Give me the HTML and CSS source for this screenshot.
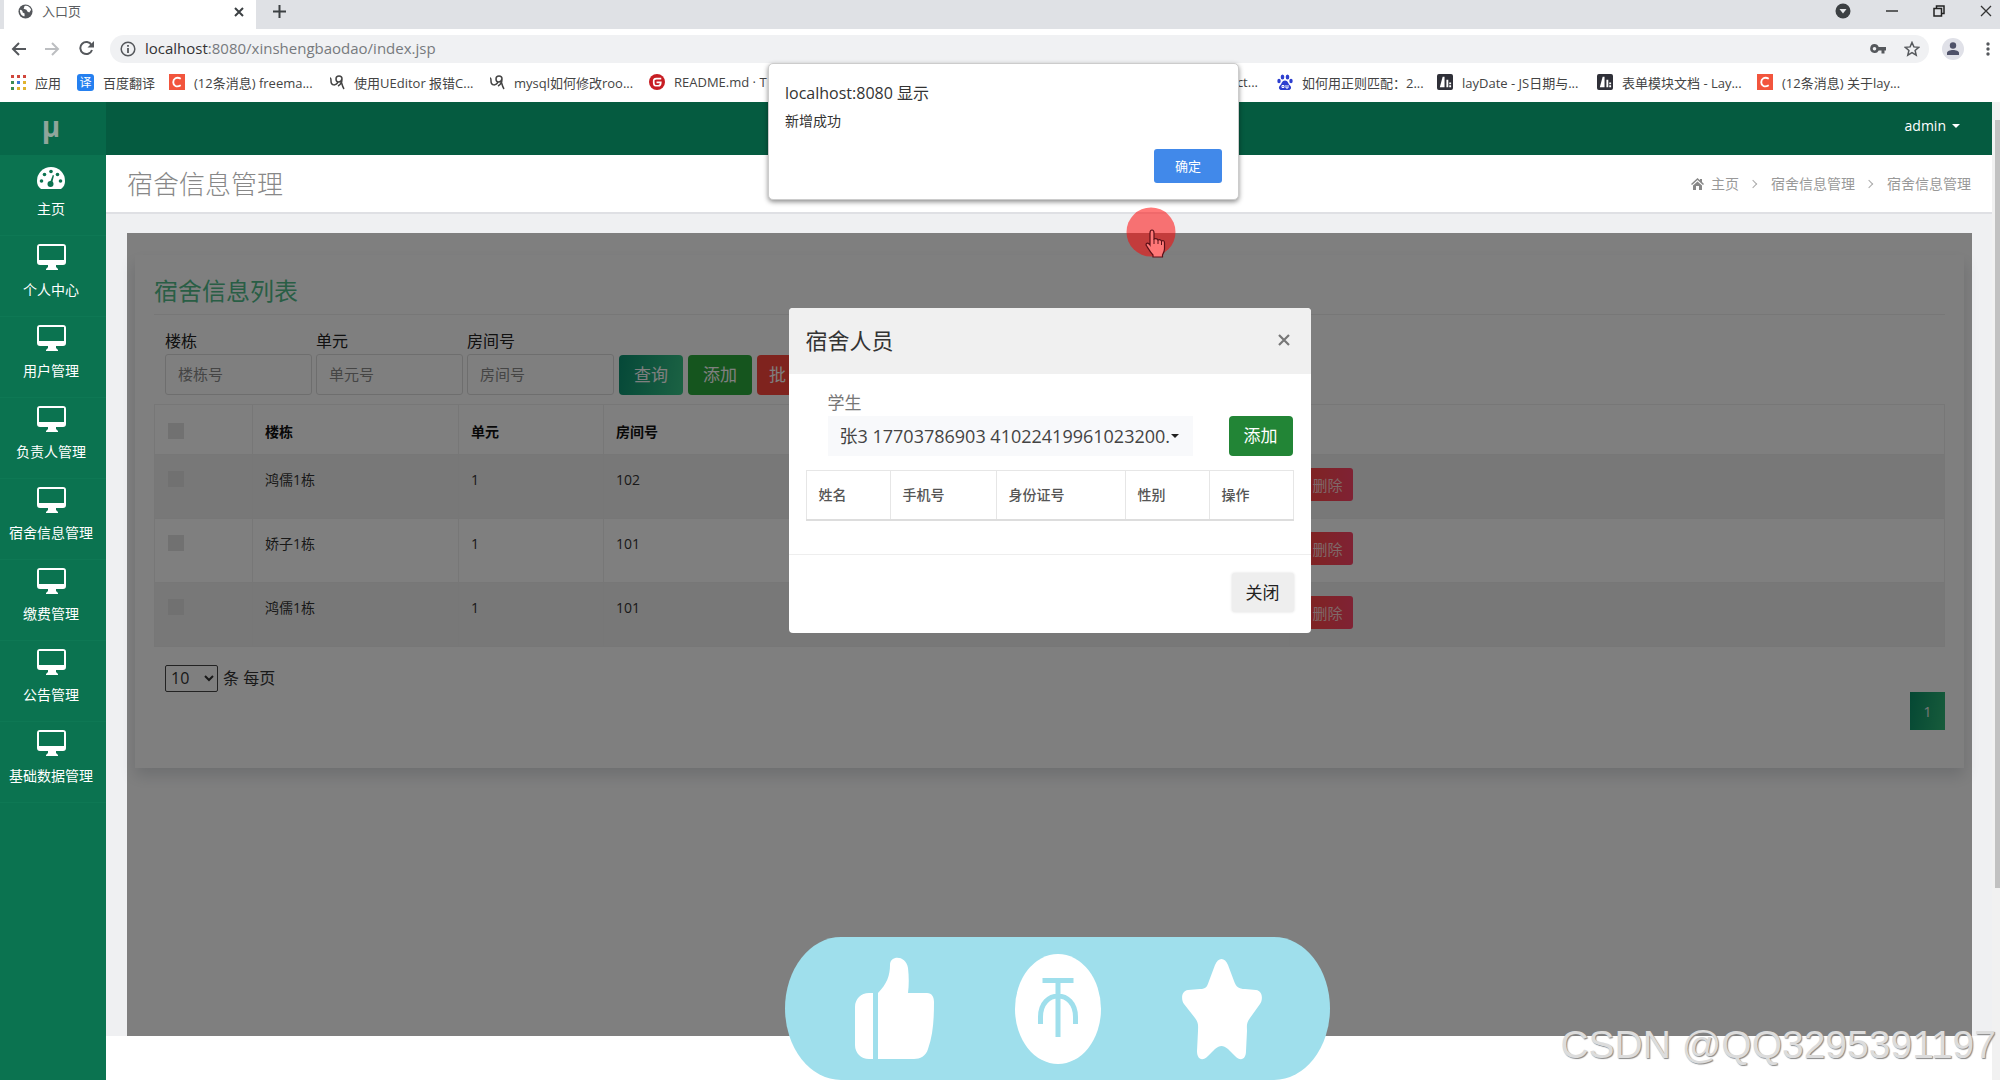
FILE: index.html
```html
<!DOCTYPE html>
<html lang="zh-CN">
<head>
<meta charset="utf-8">
<title>入口页</title>
<link rel="stylesheet" href="styles.css">
</head>
<body>
<svg class="defs" aria-hidden="true">
  <symbol id="i-monitor" viewBox="0 0 29 26"><path fill="currentColor" fill-rule="evenodd" d="M3 0h23a3 3 0 0 1 3 3v15a3 3 0 0 1-3 3h-7v2l2 2v1H9v-1l2-2v-2H3a3 3 0 0 1-3-3V3a3 3 0 0 1 3-3zM2 2v14h25V2z"/></symbol>
  <symbol id="i-dash" viewBox="0 0 28 22"><path fill="currentColor" d="M4 22C1 20 0 17 0 14a14 14 0 0 1 28 0c0 3-1 6-4 8z"/><g fill="#0b7350"><circle cx="4.500" cy="14" r="1.800"/><circle cx="7.500" cy="7.500" r="1.800"/><circle cx="14" cy="4.500" r="1.800"/><circle cx="20.500" cy="7.500" r="1.800"/><circle cx="23.500" cy="14" r="1.800"/><circle cx="13.500" cy="17" r="3"/><path d="M12.800 16l3-8 1.200.5-2 8z"/></g></symbol>
  <symbol id="i-c" viewBox="0 0 17 17"><path fill="#f2553d" d="M0 0h17v17H0z"/><path fill="none" stroke="#fff" stroke-width="2" d="M12.500 5C8 2.500 4.500 5 4.500 8.700s3.500 6 8 3.300"/></symbol>
  <symbol id="i-ua" viewBox="0 0 16 16"><path fill="none" stroke="#444" stroke-width="1.500" d="M1 4c1 0 1 1 1 3 0 5 5 5 7 1M13 5c0-4-6-4-6 0s5 4 6 0c0 4-2 6-4 7M12 7c1 2 1 5 3 8"/></symbol>
  <symbol id="i-lay" viewBox="0 0 17 17"><rect width="17" height="17" rx="2" fill="#2f3038"/><path fill="#fff" d="M3 14L6 3h2v11zM10 6h2v8h-2zm3 3h2v2h-2zm0 3h2v2h-2z"/></symbol>
</svg>
<div class="window">
  <header class="tabs">
    <div class="tab">
      <svg class="tab-icon" viewBox="0 0 16 16"><circle cx="8" cy="8" r="7.500" fill="#54575b"/><path fill="#fff" d="M2 6c2 0 3 1 3 3l2 1v3c-3 0-5-3-5-7zM7 2c3-1 6 1 7 4l-2 3-2-1-1-2-3-1z"/></svg>
      <span class="tab-title">入口页</span>
      <button class="bare" aria-label="关闭标签"><svg width="10" height="10" viewBox="0 0 10 10"><path d="M1 1l8 8M9 1l-8 8" stroke="#3c4043" stroke-width="2"/></svg></button>
    </div>
    <button class="bare new-tab" aria-label="新标签"><svg width="13" height="13" viewBox="0 0 13 13"><path d="M6.500 0v13M0 6.500h13" stroke="#3c4043" stroke-width="2"/></svg></button>
    <div class="win-buttons">
      <button class="bare" aria-label="标签搜索"><svg width="16" height="16" viewBox="0 0 16 16"><circle cx="8" cy="8" r="7.500" fill="#3c4043"/><path d="M4.500 6h7L8 10.500z" fill="#e6e8eb"/></svg></button>
      <button class="bare" aria-label="最小化"><svg width="12" height="12" viewBox="0 0 12 12"><path d="M0 6h12" stroke="#333" stroke-width="1.500"/></svg></button>
      <button class="bare" aria-label="还原"><svg width="12" height="12" viewBox="0 0 12 12"><path d="M1 3.500h7.500V11H1zM3.500 3V1H11v7.500H9" fill="none" stroke="#222" stroke-width="1.500"/></svg></button>
      <button class="bare" aria-label="关闭"><svg width="12" height="12" viewBox="0 0 12 12"><path d="M1 1l10 10M11 1L1 11" stroke="#333" stroke-width="1.300"/></svg></button>
    </div>
  </header>
  <div class="toolbar">
    <div class="nav-buttons">
      <button class="bare" aria-label="后退"><svg width="15" height="14" viewBox="0 0 15 14"><path d="M15 7H2M8 1L2 7l6 6" fill="none" stroke="#55585c" stroke-width="2"/></svg></button>
      <button class="bare" aria-label="前进"><svg width="15" height="14" viewBox="0 0 15 14"><path d="M0 7h13M7 1l6 6-6 6" fill="none" stroke="#bcbec1" stroke-width="2"/></svg></button>
      <button class="bare" aria-label="刷新"><svg width="15" height="15" viewBox="0 0 15 15"><path d="M12.500 4A6 6 0 1 0 13 9" fill="none" stroke="#55585c" stroke-width="2"/><path d="M15 0v6.500H8.500z" fill="#55585c"/></svg></button>
    </div>
    <div class="omnibox">
      <svg width="16" height="16" viewBox="0 0 16 16"><circle cx="8" cy="8" r="6.800" fill="none" stroke="#55585c" stroke-width="1.500"/><path d="M8 7v5M8 4v1.800" stroke="#55585c" stroke-width="1.800"/></svg>
      <span class="url"><b>localhost</b>:8080/xinshengbaodao/index.jsp</span>
      <svg width="16" height="10" viewBox="0 0 16 10"><path fill="#55585c" fill-rule="evenodd" d="M4.500 0a4.500 4.500 0 0 1 4.200 3H16v3.500h-1.500V9.500h-3V6.500H8.700A4.500 4.500 0 1 1 4.500 0zm0 3a1.800 1.800 0 1 0 0 3.600 1.800 1.800 0 0 0 0-3.600z"/></svg>
      <svg width="16" height="16" viewBox="0 0 16 16"><path d="M8 1.500l1.900 4.400 4.800.4-3.600 3.200 1.100 4.700L8 11.700l-4.200 2.500 1.100-4.700-3.600-3.200 4.800-.4z" fill="none" stroke="#55585c" stroke-width="1.500"/></svg>
    </div>
    <svg class="avatar" viewBox="0 0 22 22"><circle cx="11" cy="11" r="11" fill="#e0e1e8"/><circle cx="11" cy="7.500" r="3.200" fill="#4f5269"/><path d="M5 17v-2c0-4 12-4 12 0v2z" fill="#4f5269"/></svg>
    <button class="bare" aria-label="菜单"><svg width="4" height="14" viewBox="0 0 4 14"><g fill="#55585c"><circle cx="2" cy="2" r="1.700"/><circle cx="2" cy="7" r="1.700"/><circle cx="2" cy="12" r="1.700"/></g></svg></button>
  </div>
  <nav class="bookmarks">
    <a href="#" class="mark mark-apps"><svg viewBox="0 0 16 16"><g fill="#d0473c"><path d="M1 1h3v3H1zM7 1h3v3H7zM13 1h3v3h-3z"/></g><path fill="#3d8b53" d="M1 7h3v3H1zM1 13h3v3H1z"/><path fill="#3b78d8" d="M7 7h3v3H7z"/><path fill="#e0b32d" d="M13 7h3v3h-3zM7 13h3v3H7zM13 13h3v3h-3z"/></svg>应用</a>
    <a href="#" class="mark mark-fy"><span class="fy">译</span>百度翻译</a>
    <a href="#" class="mark"><svg><use href="#i-c"/></svg>(12条消息) freema...</a>
    <a href="#" class="mark"><svg><use href="#i-ua"/></svg>使用UEditor 报错C...</a>
    <a href="#" class="mark"><svg><use href="#i-ua"/></svg>mysql如何修改roo...</a>
    <a href="#" class="mark"><svg viewBox="0 0 17 17"><circle cx="8.500" cy="8.500" r="8.500" fill="#c71d23"/><path d="M13 5H8C5 5 5 6 5 8.500S5 12.500 7 12.500h3c2 0 2.500-1 2.500-3.500H8" fill="none" stroke="#fff" stroke-width="1.800"/></svg>README.md · T</a>
    <a href="#" class="mark mark-under">ct...</a>
    <a href="#" class="mark"><svg viewBox="0 0 16 16"><g fill="#2d3fcf"><ellipse cx="5.500" cy="3" rx="1.800" ry="2.600"/><ellipse cx="10.500" cy="3" rx="1.800" ry="2.600"/><ellipse cx="2" cy="7" rx="1.700" ry="2.200"/><ellipse cx="14" cy="7" rx="1.700" ry="2.200"/><path d="M8 6.500c3 0 3 3 5 5s1 4.500-1.500 4.500h-7C2 16 1 13.500 3 11.500s2-5 5-5z"/></g><path d="M5 11.500h2v2H5zM9 11v3h2v-3" fill="none" stroke="#fff"/></svg>如何用正则匹配：2...</a>
    <a href="#" class="mark"><svg><use href="#i-lay"/></svg>layDate - JS日期与...</a>
    <a href="#" class="mark"><svg><use href="#i-lay"/></svg>表单模块文档 - Lay...</a>
    <a href="#" class="mark"><svg><use href="#i-c"/></svg>(12条消息) 关于lay...</a>
  </nav>

  <div class="page">
    <aside class="sidebar">
      <div class="logo">μ</div>
      <a href="#" class="side-item"><svg class="dash"><use href="#i-dash"/></svg>主页</a>
      <a href="#" class="side-item"><svg><use href="#i-monitor"/></svg>个人中心</a>
      <a href="#" class="side-item"><svg><use href="#i-monitor"/></svg>用户管理</a>
      <a href="#" class="side-item"><svg><use href="#i-monitor"/></svg>负责人管理</a>
      <a href="#" class="side-item"><svg><use href="#i-monitor"/></svg>宿舍信息管理</a>
      <a href="#" class="side-item"><svg><use href="#i-monitor"/></svg>缴费管理</a>
      <a href="#" class="side-item"><svg><use href="#i-monitor"/></svg>公告管理</a>
      <a href="#" class="side-item"><svg><use href="#i-monitor"/></svg>基础数据管理</a>
    </aside>
    <main class="main">
      <div class="topbar"><button class="bare user">admin<span class="caret"></span></button></div>
      <div class="titlebar">
        <h1>宿舍信息管理</h1>
        <nav class="crumbs">
          <svg width="13" height="12" viewBox="0 0 13 12"><path fill="#888" d="M6.500 0L0 6l1 1 5.500-5L12 7l1-1-2-2V1H9v1.300zM2 7.500L6.500 3.500 11 7.500V12H8V8H5v4H2z"/></svg>
          <a href="#">主页</a><i></i><a href="#">宿舍信息管理</a><i></i><a href="#">宿舍信息管理</a>
        </nav>
      </div>
      <div class="content">
        <section class="frame">
          <div class="card">
            <h2>宿舍信息列表</h2>
            <form class="filters">
              <label>楼栋<input type="text" placeholder="楼栋号"></label>
              <label>单元<input type="text" placeholder="单元号"></label>
              <label>房间号<input type="text" placeholder="房间号"></label>
              <button type="button" class="btn btn-query">查询</button>
              <button type="button" class="btn btn-add">添加</button>
              <button type="button" class="btn btn-batch">批</button>
            </form>
            <table class="rooms">
              <colgroup><col class="c1"><col class="c2"><col class="c3"><col class="c4"><col></colgroup>
              <thead><tr><th><input type="checkbox" aria-label="全选"></th><th>楼栋</th><th>单元</th><th>房间号</th><th></th></tr></thead>
              <tbody>
                <tr><td><input type="checkbox" aria-label="选择"></td><td>鸿儒1栋</td><td>1</td><td>102</td><td class="ops"><button class="btn-del">删除</button></td></tr>
                <tr><td><input type="checkbox" aria-label="选择"></td><td>娇子1栋</td><td>1</td><td>101</td><td class="ops"><button class="btn-del">删除</button></td></tr>
                <tr><td><input type="checkbox" aria-label="选择"></td><td>鸿儒1栋</td><td>1</td><td>101</td><td class="ops"><button class="btn-del">删除</button></td></tr>
              </tbody>
            </table>
            <label class="per-page"><select><option>10</option></select>条 每页</label>
            <div class="pager"><button>1</button></div>
          </div>
          <div class="backdrop">
            <div class="modal" role="dialog">
              <div class="modal-head"><h3>宿舍人员</h3><button class="bare" aria-label="关闭"><svg width="12" height="12" viewBox="0 0 12 12"><path d="M1 1l10 10M11 1L1 11" stroke="#777" stroke-width="2.200"/></svg></button></div>
              <div class="modal-body">
                <div class="picker">
                  <div class="picker-field">
                    <label for="stu">学生</label>
                    <div class="select-wrap"><select id="stu"><option>张3 17703786903 41022419961023200.</option></select><span class="caret"></span></div>
                  </div>
                  <button class="btn btn-add-solid">添加</button>
                </div>
                <table class="people">
                  <colgroup><col class="p1"><col class="p2"><col class="p3"><col class="p4"><col></colgroup>
                  <thead><tr><th>姓名</th><th>手机号</th><th>身份证号</th><th>性别</th><th>操作</th></tr></thead>
                </table>
              </div>
              <div class="modal-foot"><button class="btn-close">关闭</button></div>
            </div>
          </div>
        </section>
      </div>
      <footer class="bottom"></footer>
    </main>
    <div class="scrollbar"><div class="thumb"></div></div>
  </div>

  <div class="alert" role="alertdialog">
    <div class="alert-title">localhost:8080 显示</div>
    <p>新增成功</p>
    <button>确定</button>
  </div>
  <svg class="pointer" viewBox="0 0 50 52"><circle cx="25" cy="25" r="24.500" fill="#f00" fill-opacity=".53"/><path d="M24 26c0-4 4-4 4 0v6c3-1 3 0 4 1 2-1 3 0 3.500 1 2-1 3 0 3 2v6c0 2-1 4-2 6v2H27v-2c-3-3-5-7-7-10 0-2 2-3 4 0z" fill="#f77" stroke="#5a1018" stroke-width="1.200"/><path d="M28 32v5M32 33v4M35.500 34v4" stroke="#5a1018"/></svg>
  <svg class="praise" viewBox="0 0 545 143"><path fill="#9fdfec" d="M56 0h433a56 71.500 0 0 1 0 143H56A56 71.500 0 0 1 56 0z"/>
    <g fill="#fff"><path d="M84 56h4v66h-4c-8 0-14-6-14-14V70c0-8 6-14 14-14zM93 56c9-9 12-18 12-28 0-10 16-10 18 3 1 9 1 17 0 25h19c5 0 7 4 7 9 0 18-1 33-6 47-2 7-8 10-14 10H93z"/><ellipse cx="273" cy="72" rx="43" ry="55"/><path d="M430 28c3-8 10-8 13 0l6 16c2 6 5 8 11 8l11 1c7 1 7 10 4 14l-10 14c-4 5-3 9-3 13l-1 20c0 8-5 11-11 5l-7-7c-5-4-8-4-13 0l-7 7c-6 6-11 3-11-5l1-20c0-4 1-8-3-13l-11-14c-3-4-3-13 4-14l12-1c6 0 7-2 9-8z"/></g>
    <path fill="none" stroke="#9fdfec" stroke-width="5" d="M257.500 43.500h31M273 44v56M255.500 87V80c0-28 35-28 35 0v7"/></svg>
  <div class="watermark">CSDN @QQ3295391197</div>
</div>
</body>
</html>
```
FILE: styles.css
```css
* { box-sizing: border-box; }
body {
  margin: 0;
  overflow: hidden;
  font-family: "Open Sans", "Noto Sans CJK SC", sans-serif;
  font-size: 14px;
  color: #333;
}
a { color: inherit; text-decoration: none; }
h1, h2, h3, p { margin: 0; font-weight: 400; }
button, input, select { font: inherit; }
svg { display: block; flex: none; }
.defs { position: absolute; width: 0; height: 0; }
.bare { display: flex; padding: 0; border: 0; background: none; color: inherit; }
.window { position: relative; display: flex; flex-direction: column; min-height: 100vh; background: #fff; }

/* browser chrome */
.tabs { display: flex; height: 29px; background: #dfe1e5; }
.tab { display: flex; align-items: center; width: 252px; margin-left: 4px; padding: 0 12px 6px 14px; background: #fff; }
.tab-icon { width: 15px; height: 15px; }
.tab-title { flex: 1; margin-left: 9px; font-size: 13px; line-height: 23px; color: #5a5d61; }
.new-tab { align-items: center; padding: 0 0 6px 17px; }
.win-buttons { display: flex; align-items: center; gap: 35px; margin-left: auto; padding: 0 8px 8px 0; }
.toolbar { display: flex; align-items: center; height: 34px; padding: 5px 10px 0 11px; }
.nav-buttons { display: flex; align-items: center; gap: 19px; width: 99px; }
.omnibox { display: flex; flex: 1; align-items: center; gap: 18px; height: 28px; padding: 0 9px 0 10px; border-radius: 14px; background: #f0f1f3; }
.url { flex: 1; margin-left: -9px; padding-bottom: 2px; font-size: 15px; line-height: 24px; color: #777a7e; }
.url b { font-weight: 400; color: #333; }
.avatar { width: 22px; height: 22px; margin: 0 22px 0 13px; }
.bookmarks { display: flex; height: 39px; padding: 0 0 1px 10px; white-space: nowrap; }
.mark { display: flex; align-items: center; gap: 9px; width: 160px; flex: none; font-size: 13px; color: #444; }
.mark svg { width: 16px; height: 16px; }
.mark-apps { width: 67px; }
.mark-fy { width: 92px; }
.mark-under { width: 468px; justify-content: flex-end; padding-right: 19px; }
.fy { width: 17px; height: 17px; border-radius: 3px; background: #2580f0; color: #fff; font-size: 12px; line-height: 17px; text-align: center; }

/* application shell */
.page { display: flex; flex: 1; }
.sidebar { width: 106px; background: #0b7350; color: #fff; }
.logo { height: 53px; background: #076849; color: #8fa59b; font-size: 28px; font-weight: 700; line-height: 48px; text-align: center; padding-right: 4px; }
.side-item { display: flex; flex-direction: column; align-items: center; justify-content: flex-end; gap: 8px; height: 81px; padding: 0 4px 14px 0; border-bottom: 1px solid #0e7854; line-height: 24px; }
.side-item svg { width: 29px; height: 26px; }
.side-item .dash { width: 28px; height: 22px; }
.main { display: flex; flex: 1; flex-direction: column; min-width: 0; }
.topbar { display: flex; justify-content: flex-end; height: 53px; padding: 0 32px 6px 0; background: #055b40; color: #fff; }
.user { align-items: center; gap: 6px; }
.caret { width: 0; border: 4px solid transparent; border-top-color: currentColor; border-bottom: 0; }
.titlebar { display: flex; align-items: center; justify-content: space-between; height: 59px; padding: 0 21px; border-bottom: 2px solid #dfe0e4; }
.titlebar h1 { font-size: 26px; font-weight: 300; line-height: 40px; color: #888; }
.crumbs { display: flex; align-items: center; gap: 7px; color: #999; }
.crumbs a { line-height: 20px; }
.crumbs i { width: 6px; height: 6px; margin: 0 8px 0 4px; border: solid #aaa; border-width: 1px 1px 0 0; transform: rotate(45deg); }
.content { display: flex; flex: 1; padding: 19px 20px 0 21px; background: #eff0f2; }
.frame { position: relative; flex: 1; padding: 22px 8px; background: #fff; }
.bottom { height: 44px; }
.scrollbar { width: 8px; padding: 18px 0 0 3px; background: #f1f1f1; }
.thumb { height: 80%; background: #c1c1c1; }

/* room list */
.card { height: 513px; padding: 18px 19px; box-shadow: 0 8px 14px rgba(60, 70, 90, .18); }
.card h2 { height: 42px; border-bottom: 1px solid #eee; font-size: 24px; line-height: 36px; color: #52bd8b; }
.filters { display: flex; align-items: flex-end; gap: 4px; padding: 13px 11px 9px; }
.filters label { display: flex; flex-direction: column; width: 147px; font-size: 16px; line-height: 26px; color: #222; }
.filters input { height: 41px; padding: 0 12px 1px; border: 1px solid #ddd; border-radius: 3px; background: transparent; font-size: 15px; color: #555; }
.filters input::placeholder { color: #8a8a8a; }
.btn { width: 64px; height: 40px; padding: 0; border: 0; border-radius: 4px; color: #fff; font-size: 17px; line-height: 36px; text-align: center; }
.filters .btn { margin-left: 1px; }
.btn-query { background: linear-gradient(100deg, #0a9070, #38c688); }
.btn-add { background: #2baa3c; }
.btn-batch { width: 96px; padding-left: 12px; background: #ff463c; text-align: left; }
.rooms { width: 100%; table-layout: fixed; border-collapse: collapse; border: 1px solid #eee; font-size: 14px; line-height: 22px; color: #333; }
.rooms .c1 { width: 98px; }
.rooms .c2 { width: 206px; }
.rooms .c3 { width: 145px; }
.rooms .c4 { width: 686px; }
.rooms th, .rooms td { padding: 14px 12px; border: 1px solid #eee; text-align: left; vertical-align: top; }
.rooms th { height: 50px; color: #111; font-weight: 700; padding: 16px 12px 10px; }
.rooms td { height: 64px; }
.rooms tbody tr:nth-child(odd) { background: #f0f0f0; }
.rooms input { display: block; appearance: none; width: 16px; height: 16px; margin: 2px 0 0 1px; background: #e3e3e3; }
.rooms .ops { padding: 13px 12px; }
.btn-del { display: block; width: 51px; height: 33px; padding: 0; border: 0; border-radius: 3px; background: linear-gradient(90deg, #ff4840, #ff4468); color: #ffd0d0; font-size: 15px; line-height: 30px; }
.per-page { display: flex; align-items: center; gap: 5px; margin: 17px 11px 0; font-size: 16px; line-height: 28px; color: #333; }
.per-page select { width: 53px; height: 27px; padding: 0 0 0 1px; border: 1px solid #444; border-radius: 2px; background: transparent; color: #333; }
.pager { display: flex; justify-content: flex-end; }
.pager button { width: 35px; height: 38px; padding: 0; border: 0; background: linear-gradient(100deg, #0a9068, #2fb877); color: #eee; }

/* occupants modal */
.backdrop { position: absolute; inset: 0; display: flex; justify-content: center; align-items: flex-start; padding-top: 75px; background: rgba(0, 0, 0, .5); }
.modal { width: 522px; height: 325px; border-radius: 4px; background: #fff; }
.modal-head { display: flex; align-items: center; justify-content: space-between; height: 66px; padding: 0 21px 2px 17px; border-radius: 4px 4px 0 0; background: #f0f0f0; }
.modal-head h3 { font-size: 22px; line-height: 36px; color: #333; }
.modal-body { height: 181px; padding: 16px 17px; border-bottom: 1px solid #eee; }
.picker { display: flex; align-items: flex-end; justify-content: space-between; padding: 0 1px 14px 22px; }
.picker-field { display: flex; flex-direction: column; width: 365px; font-size: 17px; line-height: 26px; color: #777; }
.select-wrap { display: flex; align-items: center; height: 40px; padding-right: 14px; background: #f8f9fb; color: #222; }
.select-wrap select { flex: 1; min-width: 0; appearance: none; padding: 0 0 0 12px; border: 0; background: none; color: #444; font-size: 18px; }
.btn-add-solid { background: #228536; }
.people { width: 100%; table-layout: fixed; border-collapse: collapse; line-height: 22px; color: #555; }
.people .p1 { width: 84px; }
.people .p2 { width: 106px; }
.people .p3 { width: 129px; }
.people .p4 { width: 84px; }
.people th { height: 49px; padding: 0 12px; border: 1px solid #e6e6e6; border-bottom: 2px solid #ddd; font-weight: 500; text-align: left; }
.modal-foot { display: flex; justify-content: flex-end; padding: 18px 17px; }
.btn-close { width: 62px; height: 39px; padding: 0; border: 0; border-radius: 3px; background: #eee; box-shadow: 0 0 3px #ddd; color: #222; font-size: 17px; line-height: 36px; }

/* layers over the window */
.alert { position: absolute; top: 63px; left: 768px; width: 471px; height: 137px; padding: 15px 16px; border: 1px solid #ccc; border-radius: 5px; background: #fff; box-shadow: 0 2px 5px rgba(0, 0, 0, .45); color: #333; }
.alert-title { font-size: 16px; line-height: 28px; }
.alert p { line-height: 28px; }
.alert button { display: block; width: 68px; height: 34px; margin: 14px 0 0 auto; padding: 0 0 2px; border: 0; border-radius: 3px; background: #4189ea; color: #fff; font-size: 13px; }
.pointer { position: absolute; top: 207px; left: 1126px; width: 50px; height: 52px; }
.praise { position: absolute; bottom: 0; left: 785px; width: 545px; height: 143px; }
.watermark { position: absolute; right: 4px; bottom: 10px; font: 39px/50px "Liberation Sans", sans-serif; color: #dcdcdc; text-shadow: 1px 1px 1px #888; }
```
